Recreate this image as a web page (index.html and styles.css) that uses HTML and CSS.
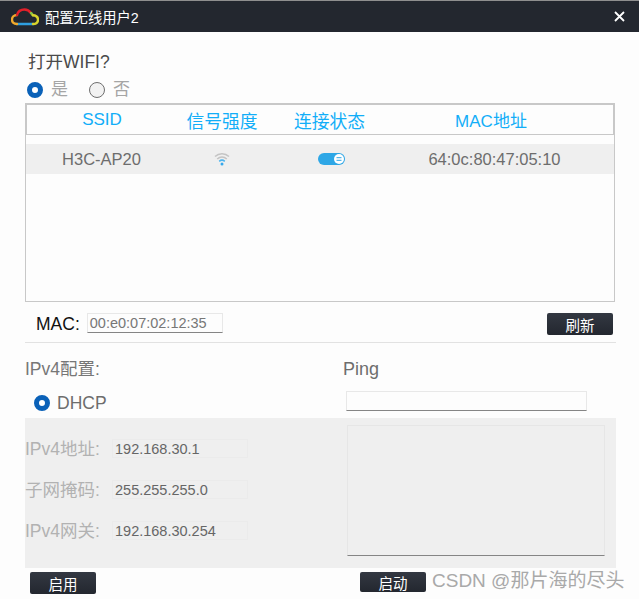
FILE: index.html
```html
<!DOCTYPE html>
<html lang="zh">
<head>
<meta charset="utf-8">
<title>配置无线用户2</title>
<link rel="stylesheet" href="styles.css">
</head>
<body>
<div class="window">
  <header class="titlebar">
    <svg class="logo" width="28" height="18" viewBox="0 0 28 18" fill="none" stroke-width="2.4" stroke-linecap="round">
      <path d="M6 16H22" stroke="#2f9fe0"/>
      <path d="M6 16C2.500 16 1 14 1 11.500C1 9 3 7 6 7" stroke="#f0a92c"/>
      <path d="M6 7C7 3.500 10 1.500 13.500 1.500C16.500 1.500 18.500 3 20 5" stroke="#e3202a"/>
      <path d="M20 5C21 5.800 21.500 6.500 21.800 7.300" stroke="#8cc63f"/>
      <path d="M21.800 7.300C25 7.500 27 9.200 27 11.700C27 14.300 25 16 22 16" stroke="#d8d32c"/>
    </svg>
    <span class="title">配置无线用户2</span>
    <svg class="close" width="11" height="11" viewBox="0 0 11 11" stroke="#fff" stroke-width="1.800"><path d="M1 1L10 10M10 1L1 10"/></svg>
  </header>

  <div class="question">打开WIFI?</div>
  <div class="choices">
    <span class="radio on"></span><span class="choice first">是</span>
    <span class="radio"></span><span class="choice">否</span>
  </div>

  <section class="table">
    <div class="thead">
      <span class="c1">SSID</span><span class="c2 wide">信号强度</span><span class="c3 wide">连接状态</span><span class="c4">MAC地址</span>
    </div>
    <div class="trow">
      <span class="c1">H3C-AP20</span>
      <span class="c2">
        <svg width="16" height="14" viewBox="0 0 16 14" fill="none" stroke-width="1.600">
          <path d="M1 4.500C5 0.800 11 0.800 15 4.500" stroke="#c4c4c4"/>
          <path d="M3.200 7C6 4.500 10 4.500 12.800 7" stroke="#c4c4c4"/>
          <path d="M5.200 9.300C6.800 8 9.200 8 10.800 9.300" stroke="#4db4ee"/>
          <circle cx="8" cy="12" r="1.500" fill="#35a8ec"/>
        </svg>
      </span>
      <span class="c3">
        <svg class="toggle" width="27" height="12" viewBox="0 0 27 12">
          <rect width="27" height="12" rx="6" fill="#2ea7e6"/>
          <circle cx="21" cy="6" r="5" fill="#fff"/>
          <path d="M18.500 4.700H23.500M18.500 7.300H23.500" stroke="#2ea7e6" stroke-width="1"/>
        </svg>
      </span>
      <span class="c4 macval">64:0c:80:47:05:10</span>
    </div>
  </section>

  <div class="macrow">
    <span class="maclabel">MAC:</span>
    <span class="macinput">00:e0:07:02:12:35</span>
    <button class="btn refresh">刷新</button>
  </div>

  <div class="config-top">
    <div class="col-left">
      <div class="heading">IPv4配置:</div>
      <div class="dhcp"><span class="radio on"></span><span>DHCP</span></div>
    </div>
    <div class="col-right">
      <div class="heading ping">Ping</div>
      <div class="pinginput"></div>
    </div>
  </div>

  <section class="panel">
    <div class="fields">
      <div class="field"><span class="flabel">IPv4地址:</span><span class="fvalue">192.168.30.1</span></div>
      <div class="field"><span class="flabel">子网掩码:</span><span class="fvalue">255.255.255.0</span></div>
      <div class="field"><span class="flabel">IPv4网关:</span><span class="fvalue">192.168.30.254</span></div>
    </div>
    <div class="pingoutput"></div>
  </section>

  <div class="footer">
    <button class="btn enable">启用</button>
    <button class="btn start">启动</button>
    <span class="watermark">CSDN @那片海的尽头</span>
  </div>
</div>
</body>
</html>
```

FILE: styles.css
```css
* { box-sizing: border-box; }
html, body { margin: 0; padding: 0; }
body {
  background: #fdfdfd;
  font-family: "Liberation Sans", "Noto Sans CJK SC", sans-serif;
  font-size: 16.500px;
  color: #6d6d6d;
  overflow: hidden;
}
.window { width: 639px; height: 599px; }

.titlebar {
  height: 32px;
  background: #23272f;
  border-top: 1px solid #8f8f8f;
  display: flex;
  align-items: center;
  color: #fff;
  padding: 0 14px 0 11px;
}
.logo { margin-right: 6px; }
.title { font-size: 14.300px; flex: 1; }
.close { display: block; }

.question {
  margin: 20px 0 0 28px;
  height: 20px;
  line-height: 20px;
  font-size: 17.500px;
  color: #4a4a4a;
}
.choices {
  margin: 8px 0 0 27px;
  height: 20px;
  display: flex;
  align-items: center;
  font-size: 17px;
  line-height: 18px;
  color: #a5a5a5;
}
.radio {
  width: 16px;
  height: 16px;
  border-radius: 50%;
  border: 1px solid #6e6e6e;
  background: #f2f2f2;
  flex: none;
}
.radio.on { border: 5px solid #0a61b8; background: #fff; }
.choice { margin-left: 8px; margin-top: -1px; }
.choice.first { margin-right: 21px; }

.table {
  margin: 3px 0 0 25px;
  width: 590px;
  height: 199px;
  border: 1px solid #c8c8c8;
}
.thead {
  height: 32px;
  margin-top: -1px;
  margin-left: -1px;
  width: 590px;
  border: 2px solid #c8c8c8;
  border-bottom-width: 1px;
  display: flex;
  align-items: center;
  color: #12aef8;
  font-size: 17px;
}
.thead .wide { font-size: 17.800px; }
.thead .c1 { width: 150px; }
.trow {
  height: 30px;
  margin-top: 9px;
  background: #efefef;
  display: flex;
  align-items: center;
}
.c1, .c2, .c3, .c4 { display: flex; justify-content: center; align-items: center; flex: none; }
.c1 { width: 151px; }
.c2 { width: 90px; }
.c3 { width: 125px; }
.c4 { width: 198px; }
.macval { width: 205px; }
.toggle { display: block; margin-left: 4px; }

.macrow {
  margin: 11px 0 0 36px;
  width: 577px;
  height: 22px;
  display: flex;
  align-items: center;
}
.maclabel { color: #111; margin-right: 7px; font-size: 17.500px; }
.macinput {
  width: 136px;
  height: 20px;
  margin-top: -2px;
  border: 1px solid #e8e8e8;
  border-bottom: 1px solid #858585;
  font-size: 14.500px;
  line-height: 19px;
  padding-left: 2px;
  color: #777;
}
.btn {
  height: 22px;
  width: 66px;
  padding: 0;
  border: 0;
  border-radius: 2px;
  background: linear-gradient(#333842, #23272f);
  color: #fff;
  font-family: inherit;
  font-size: 14.500px;
}
.refresh { margin-left: auto; }

.config-top {
  margin: 7px 0 0 25px;
  width: 591px;
  height: 76px;
  border-top: 1px solid #e2e2e2;
  display: flex;
}
.col-left { width: 318px; }
.col-right { flex: 1; }
.heading {
  margin-top: 16px;
  height: 20px;
  line-height: 20px;
  font-size: 17.500px;
}
.heading.ping { font-size: 18px; }
.col-left .heading { color: #777; }
.dhcp {
  margin: 14px 0 0 9px;
  display: flex;
  align-items: center;
  height: 20px;
  gap: 7px;
  font-size: 17.500px;
}
.pinginput {
  margin: 12px 0 0 3px;
  width: 241px;
  height: 20px;
  border: 1px solid #e8e8e8;
  border-bottom: 1px solid #858585;
}

.panel {
  margin-left: 25px;
  width: 591px;
  height: 150px;
  background: #efefef;
  display: flex;
}
.fields {
  width: 322px;
  padding-top: 21px;
  display: flex;
  flex-direction: column;
  gap: 22px;
}
.field { display: flex; align-items: center; height: 19px; }
.flabel { width: 87px; color: #b2b2b2; flex: none; font-size: 17.500px; margin-top: -2px; }
.fvalue {
  width: 136px;
  height: 19px;
  border: 1px solid #ebebeb;
  padding-left: 2px;
  font-size: 14.500px;
  line-height: 19px;
  color: #666;
}
.pingoutput {
  margin-top: 7px;
  width: 258px;
  height: 131px;
  border: 1px solid #e6e6e6;
  border-bottom: 1px solid #858585;
}

.footer {
  margin: 4px 0 0 30px;
  display: flex;
  align-items: flex-start;
  height: 22px;
}
.start { margin-left: 264px; height: 20px; }
.watermark {
  margin: -2px 0 0 6px;
  font-size: 19px;
  line-height: 22px;
  color: #a9a9a9;
  white-space: nowrap;
}
```
